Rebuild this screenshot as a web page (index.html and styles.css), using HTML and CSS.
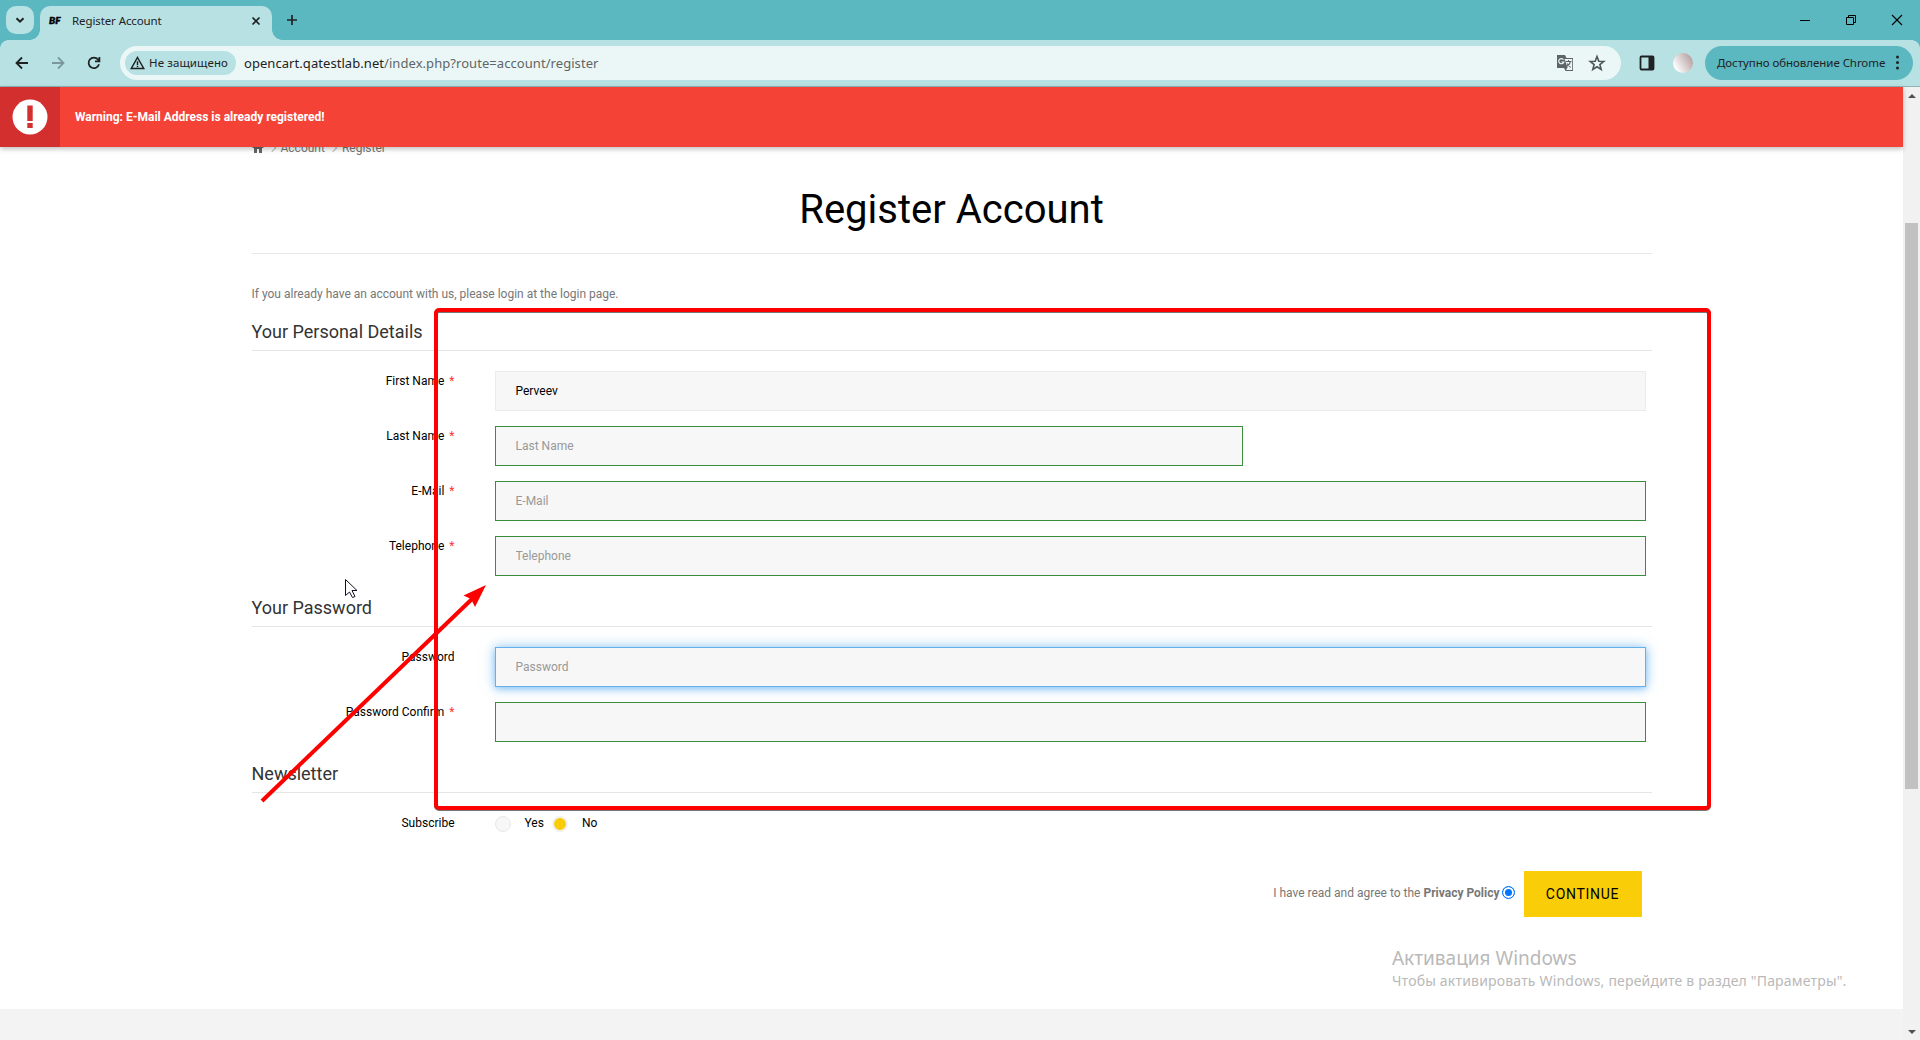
FILE: index.html
```html
<!DOCTYPE html>
<html lang="en">
<head>
<meta charset="utf-8">
<title>Register Account</title>
<link rel="stylesheet" href="styles.css">
</head>
<body>
<header class="tabs">
  <button class="tab-search"><svg width="10" height="10" viewBox="0 0 10 10"><path d="M1.500 3.200 5 6.700 8.500 3.200" fill="none" stroke="#1f2223" stroke-width="2"/></svg></button>
  <div class="tab"><span class="favicon">BF</span><span class="tab-title">Register Account</span>
    <svg class="tab-close" width="10" height="10" viewBox="0 0 10 10"><path d="M1.500 1.500 8.500 8.500M8.500 1.500 1.500 8.500" stroke="#1f2223" stroke-width="1.700"/></svg></div>
  <svg class="new-tab" width="12" height="12" viewBox="0 0 12 12"><path d="M6 1v10M1 6h10" stroke="#1f2223" stroke-width="1.700"/></svg>
  <div class="window-buttons">
    <svg width="12" height="12" viewBox="0 0 12 12"><path d="M1 6.500h10" stroke="#000"/></svg>
    <svg width="12" height="12" viewBox="0 0 12 12"><path d="M1.500 3.500h7v7h-7zM3.500 3.500v-2h7v7h-2" fill="none" stroke="#000"/></svg>
    <svg width="12" height="12" viewBox="0 0 12 12"><path d="M1 1l10 10M11 1L1 11" stroke="#000" stroke-width="1.100"/></svg>
  </div>
</header>
<nav class="toolbar">
  <div class="nav-icons">
    <svg width="16" height="16" viewBox="0 0 16 16"><path d="M14 8H3M8 2.500 2.500 8 8 13.500" fill="none" stroke="#1f2223" stroke-width="1.800"/></svg>
    <svg width="16" height="16" viewBox="0 0 16 16"><path d="M2 8h11M8 2.500 13.500 8 8 13.500" fill="none" stroke="#7b999c" stroke-width="1.800"/></svg>
    <svg width="16" height="16" viewBox="0 0 16 16"><path d="M13 9.300A5.300 5.300 0 1 1 12 4.500L13.200 6M13.400 2v4.400H9" fill="none" stroke="#1f2223" stroke-width="1.800"/></svg>
  </div>
  <div class="address">
    <span class="insecure"><svg width="15" height="14" viewBox="0 0 15 14"><path d="M7.500 1.500 13.700 12.500H1.300zM7.500 5.200v3.700M7.500 9.800v1.400" fill="none" stroke="#1f2223" stroke-width="1.500"/></svg>Не защищено</span>
    <span class="url"><b>opencart.qatestlab.net</b>/index.php?route=account/register</span>
    <svg class="translate" width="18" height="18" viewBox="0 0 18 18"><path d="M1 1h8l1.500 3H17v13H9.500L8 14H1z" fill="#5f6566"/><path d="M8.500 5h7.700v11H10l1.500-2.500z" fill="#ebf7f7"/><path d="M7.500 5.700A2.600 2.600 0 1 0 7.800 8H5.500" fill="none" stroke="#ebf7f7" stroke-width="1.200"/><path d="M9.500 7.500h6M12.500 6v1.500M14.500 7.500c-.5 2-2 4-4 5M11 9.500l3.700 4" fill="none" stroke="#5f6566" stroke-width="1.100"/></svg>
    <svg width="18" height="18" viewBox="0 0 18 18"><path d="M9 2.500l1.800 4.700 5 .3-3.900 3.100 1.300 4.900L9 12.800l-4.200 2.700 1.300-4.900-3.900-3.100 5-.3z" fill="none" stroke="#505657" stroke-width="1.600"/></svg>
  </div>
  <svg class="side-panel" width="16" height="16" viewBox="0 0 16 16"><rect x="1.500" y="1.500" width="13" height="13" rx="1" fill="none" stroke="#1f2223" stroke-width="1.800"/><path d="M9.500 1.500h5v13h-5z" fill="#1f2223"/></svg>
  <span class="avatar"></span>
  <button class="update">Доступно обновление Chrome<i class="dots"></i></button>
</nav>
<div class="viewport">
  <main class="page">
    <div class="alert"><span class="alert-icon"><svg width="38" height="38" viewBox="0 0 38 38"><circle cx="19" cy="19" r="17.500" fill="#fff"/><path d="M16.300 7.500h5.400v15.500h-5.400zM16.300 25h5.400v5h-5.400z" fill="#d32f2f"/></svg></span><span>Warning: E-Mail Address is already registered!</span></div>
    <div class="container">
      <div class="crumbs"><svg width="12" height="10" viewBox="0 0 12 10"><path d="M6 0 0 5h2v5h3V6h2v4h3V5h2z" fill="#666"/></svg><i class="chev"></i><span>Account</span><i class="chev"></i><span>Register</span></div>
      <h1>Register Account</h1>
      <p class="intro">If you already have an account with us, please login at the login page.</p>
      <form>
        <h2>Your Personal Details</h2>
        <div class="row"><label class="req">First Name</label><input value="Perveev" class="plain"></div>
        <div class="row"><label class="req">Last Name</label><input class="short" placeholder="Last Name"></div>
        <div class="row"><label class="req">E-Mail</label><input placeholder="E-Mail"></div>
        <div class="row"><label class="req">Telephone</label><input placeholder="Telephone"></div>
        <h2 class="next">Your Password</h2>
        <div class="row"><label>Password</label><input class="focused" placeholder="Password"></div>
        <div class="row"><label class="req">Password Confirm</label><input></div>
        <h2 class="next">Newsletter</h2>
        <div class="subscribe"><label>Subscribe</label><span class="choice"><i class="radio"></i>Yes</span><span class="choice"><i class="radio on"></i>No</span></div>
        <div class="actions"><span>I have read and agree to the <b>Privacy Policy</b></span><i class="native-radio"></i><button type="button" class="continue">CONTINUE</button></div>
      </form>
    </div>
    <footer></footer>
  </main>
  <aside class="scrollbar"><i class="up"></i><i class="thumb"></i><i class="down"></i></aside>
</div>
<div class="watermark"><div class="wm-title">Активация Windows</div><div class="wm-text">Чтобы активировать Windows, перейдите в раздел "Параметры".</div></div>
<svg class="markup" width="1920" height="1040" viewBox="0 0 1920 1040">
  <rect x="436" y="311" width="1273" height="498" rx="3" fill="none" stroke="#777" stroke-width="4"/>
  <rect x="436" y="310" width="1273" height="498" rx="3" fill="none" stroke="#f00" stroke-width="4"/>
  <path d="M262 801 472 599" stroke="#f00" stroke-width="4"/>
  <path d="M486 585 463.500 595.500 471 599 475 607z" fill="#f00"/>
  <path d="M345.500 579.500v16l4-3.500 3 5.500 2.500-1-3-6h5z" fill="#fff" stroke="#101020"/>
</svg>
</body>
</html>
```
FILE: styles.css
```css
* { box-sizing: border-box; }
body { margin: 0; width: 1920px; height: 1040px; overflow: hidden; position: relative; background: #fff; font: 12px/20px Roboto, sans-serif; color: #777; }
button { border: 0; padding: 0; font: inherit; }
svg { display: block; flex: none; }
.tabs { height: 40px; display: flex; align-items: flex-start; padding-left: 6px; background: #5bb8c1; font-family: "Noto Sans", sans-serif; }
.tab-search { width: 28px; height: 28px; margin-top: 6px; border-radius: 10px; background: #b8e1e4; display: grid; place-items: center; }
.tab { position: relative; width: 232px; height: 34px; margin: 6px 0 0 6px; padding: 0 11px 4px 9px; border-radius: 10px 10px 0 0; background: #b8e1e4; display: flex; align-items: center; color: #1f2223; }
.tab::before, .tab::after { content: ""; position: absolute; bottom: 0; width: 10px; height: 10px; }
.tab::before { left: -10px; background: radial-gradient(circle at 0 0, transparent 9.5px, #b8e1e4 10px); }
.tab::after { right: -10px; background: radial-gradient(circle at 100% 0, transparent 9.5px, #b8e1e4 10px); }
.favicon { width: 23px; font: italic 900 10px/16px Lato, sans-serif; color: #000; -webkit-text-stroke: .5px #000; margin-top: -3px; }
.tab-title { flex: 1; font-size: 11.5px; letter-spacing: -.1px; }
.new-tab { margin: 14px 0 0 14px; }
.window-buttons { margin: 14px 17px 0 auto; display: flex; gap: 34px; }
.toolbar { height: 47px; display: flex; align-items: center; padding: 0 7px 1px 14px; background: radial-gradient(circle at 8px 8px, #b8e1e4 7.5px, #5bb8c1 8px) 0 0 / 8px 8px no-repeat, radial-gradient(circle at 0 8px, #b8e1e4 7.5px, #5bb8c1 8px) 100% 0 / 8px 8px no-repeat, #b8e1e4; border-bottom: 1px solid #8fb3b7; font-family: "Noto Sans", sans-serif; color: #1f2223; }
.nav-icons { display: flex; gap: 20px; width: 106px; }
.address { width: 1501px; height: 34px; border-radius: 17px; background: #ebf7f7; display: flex; align-items: center; padding: 0 15px 0 5px; }
.insecure { width: 111px; height: 24px; border-radius: 12px; background: #b8e1e4; display: flex; align-items: center; gap: 4px; padding-left: 5px; font-size: 11.5px; letter-spacing: .1px; white-space: nowrap; }
.url { flex: 1; margin-left: 8px; font-size: 13px; letter-spacing: .06px; color: #5f6566; }
.url b { font-weight: 400; color: #1f2223; }
.translate { margin-right: 14px; }
.side-panel { margin-left: 18px; }
.avatar { width: 20px; height: 20px; border-radius: 50%; margin: 0 12px 0 18px; background: linear-gradient(60deg, #fff 15%, #b9a5a5 85%); }
.update { flex: 1; height: 34px; border-radius: 17px; background: #5bb8c1; color: #1f2223; display: flex; align-items: center; justify-content: space-between; padding: 0 14px 0 12px; font-size: 11.5px; letter-spacing: -.05px; white-space: nowrap; }
.dots { width: 3px; height: 3px; border-radius: 50%; background: #1f2223; box-shadow: 0 -5.5px #1f2223, 0 5.5px #1f2223; }
.viewport { height: 953px; display: flex; }
.page { width: 1903px; display: flex; flex-direction: column; }
.alert { position: relative; z-index: 1; height: 60px; flex: none; display: flex; align-items: center; background: #f44336; color: #fff; font-weight: 700; box-shadow: 0 2px 5px rgba(0,0,0,.26); }
.alert-icon { width: 60px; height: 60px; margin-right: 15px; background: #d32f2f; display: grid; place-items: center; }
.container { width: 1400px; margin: 0 0 0 251.5px; }
.crumbs { height: 20px; margin-top: -9px; display: flex; align-items: center; }
.chev { width: 6px; height: 6px; margin: 0 6px 0 5px; border: solid #bbb; border-width: 1px 1px 0 0; transform: rotate(45deg); }
h1 { margin: 0; height: 96px; padding-top: 27px; border-bottom: 1px solid #e8e8e8; text-align: center; font-size: 40px; line-height: 50px; font-weight: 400; color: #000; }
.intro { margin: 30px 0 0; }
h2 { margin: 11px 0 20px; height: 36px; padding-top: 5px; border-bottom: 1px solid #e5e5e5; font-size: 18px; line-height: 24px; font-weight: 400; color: #333; }
h2.next { margin-top: 0; }
.row { display: flex; height: 40px; margin-bottom: 15px; }
label { width: 203px; margin-right: 40px; text-align: right; color: #000; line-height: 20px; }
.req::after { content: "*"; color: #f33; margin-left: 5px; }
input { width: 1151px; height: 40px; padding: 0 20px; border: 1px solid #388e3c; border-radius: 0; background: #f7f7f7; font: 12px Roboto, sans-serif; color: #000; outline: 0; }
input::placeholder { color: #999; opacity: 1; }
.plain { border-color: #ebebeb; }
.short { width: 748px; }
.focused { border-color: #66afe9; box-shadow: 0 0 12px rgba(77,166,240,.6), 0 2px 6px rgba(77,166,240,.4); }
.subscribe { height: 20px; display: flex; color: #000; }
.choice { display: flex; margin-right: 8px; }
.radio { width: 16px; height: 16px; margin: 3px 14px 0 0; border-radius: 50%; border: 1px solid #e8e8e8; background: #f7f7f7; }
.on { background: #f9ce09; border: 2px solid #f1f1f1; }
.actions { margin-top: 38px; padding-right: 10px; height: 46px; display: flex; align-items: center; justify-content: flex-end; }
.actions span { margin-top: -2px; }
.actions b { font-weight: 700; }
.native-radio { width: 13px; height: 13px; margin: -4px 9px 0 2px; border-radius: 50%; border: 1px solid #0075ff; background: #0075ff; box-shadow: inset 0 0 0 2px #fff; }
.continue { width: 118px; height: 46px; background: #f9ce09; color: #000; font-size: 14px; letter-spacing: .7px; }
footer { margin-top: auto; height: 31px; flex: none; background: #f3f3f3; }
.scrollbar { width: 17px; background: #f1f1f1; display: flex; flex-direction: column; align-items: center; padding: 7px 0 6px; }
.up, .down { border: 4px solid transparent; }
.up { border-top: 0; border-bottom-color: #505050; }
.down { margin-top: auto; border-bottom: 0; border-top-color: #505050; }
.thumb { width: 13px; height: 566px; margin-top: 125px; background: #c1c1c1; }
.watermark { position: absolute; left: 1392px; top: 945px; font-family: "Noto Sans", sans-serif; color: #b9b9b9; white-space: nowrap; }
.wm-title { font-size: 19px; line-height: 26px; }
.wm-text { font-size: 14px; line-height: 20px; letter-spacing: .19px; }
.markup { position: absolute; left: 0; top: 0; }
```
